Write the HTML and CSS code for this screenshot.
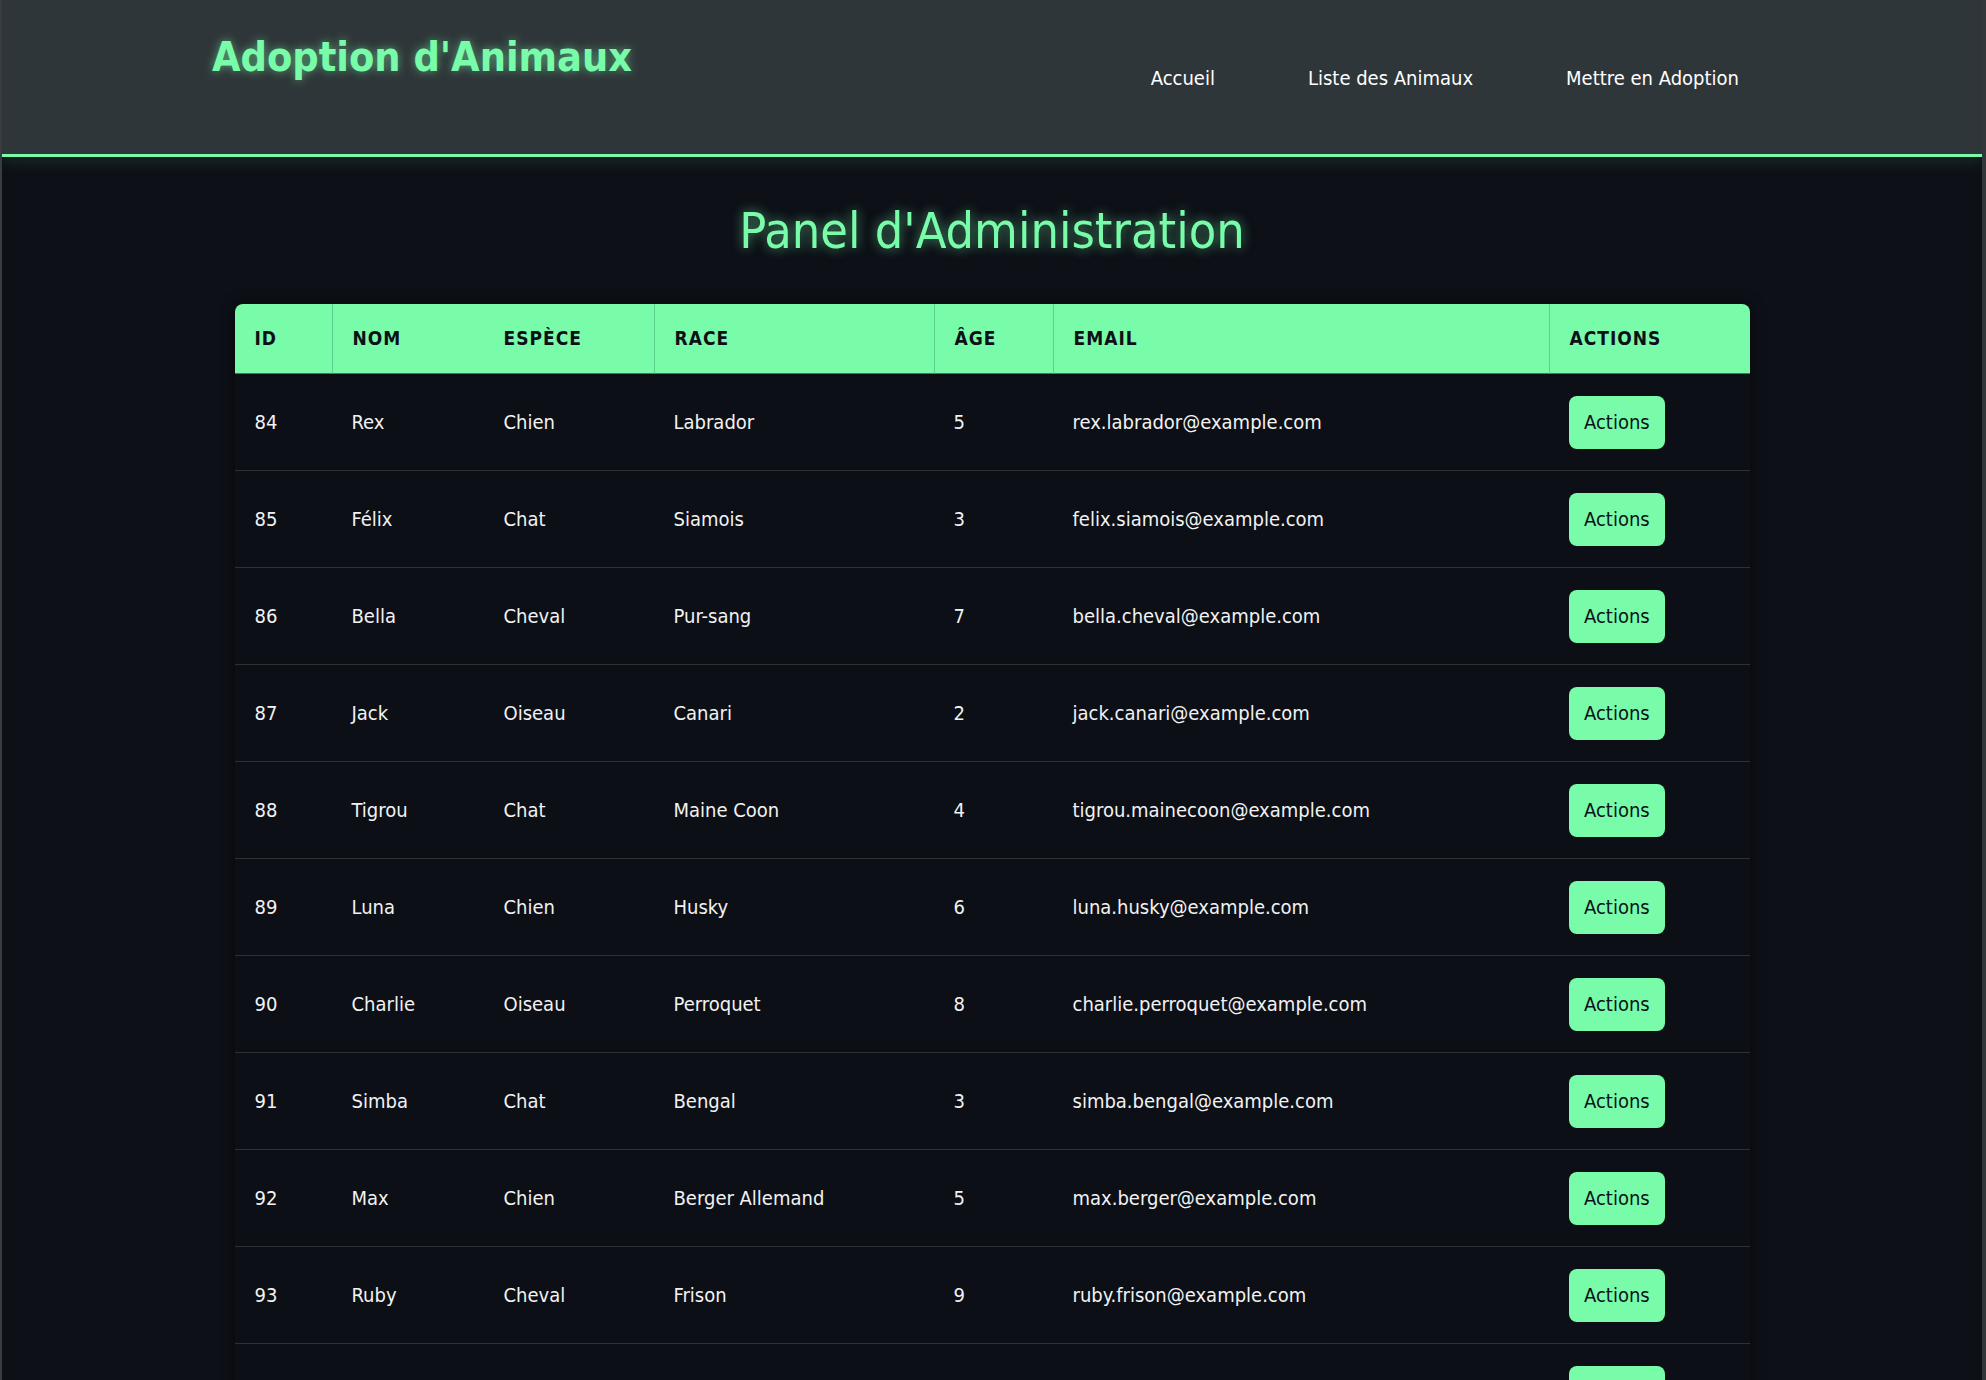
FILE: index.html
```html
<!DOCTYPE html>
<html lang="fr">
<head>
<meta charset="utf-8">
<title>Panel d'Administration</title>
<link rel="stylesheet" href="styles.css">
</head>
<body>
<header class="site-header">
  <div class="header-inner">
    <h1 class="brand">Adoption d'Animaux</h1>
    <nav class="main-nav">
      <a href="#" class="nav-link">Accueil</a>
      <a href="#" class="nav-link">Liste des Animaux</a>
      <a href="#" class="nav-link">Mettre en Adoption</a>
    </nav>
  </div>
</header>
<main class="admin">
  <h2 class="admin-title">Panel d'Administration</h2>
  <table class="admin-table">
    <thead>
      <tr>
        <th class="col-id">ID</th>
        <th class="col-nom sep">Nom</th>
        <th class="col-espece">Espèce</th>
        <th class="col-race sep">Race</th>
        <th class="col-age sep">Âge</th>
        <th class="col-email sep">Email</th>
        <th class="col-actions sep">Actions</th>
      </tr>
    </thead>
    <tbody>
      <tr><td>84</td><td>Rex</td><td>Chien</td><td>Labrador</td><td>5</td><td>rex.labrador@example.com</td><td><button class="btn-actions">Actions</button></td></tr>
      <tr><td>85</td><td>Félix</td><td>Chat</td><td>Siamois</td><td>3</td><td>felix.siamois@example.com</td><td><button class="btn-actions">Actions</button></td></tr>
      <tr><td>86</td><td>Bella</td><td>Cheval</td><td>Pur-sang</td><td>7</td><td>bella.cheval@example.com</td><td><button class="btn-actions">Actions</button></td></tr>
      <tr><td>87</td><td>Jack</td><td>Oiseau</td><td>Canari</td><td>2</td><td>jack.canari@example.com</td><td><button class="btn-actions">Actions</button></td></tr>
      <tr><td>88</td><td>Tigrou</td><td>Chat</td><td>Maine Coon</td><td>4</td><td>tigrou.mainecoon@example.com</td><td><button class="btn-actions">Actions</button></td></tr>
      <tr><td>89</td><td>Luna</td><td>Chien</td><td>Husky</td><td>6</td><td>luna.husky@example.com</td><td><button class="btn-actions">Actions</button></td></tr>
      <tr><td>90</td><td>Charlie</td><td>Oiseau</td><td>Perroquet</td><td>8</td><td>charlie.perroquet@example.com</td><td><button class="btn-actions">Actions</button></td></tr>
      <tr><td>91</td><td>Simba</td><td>Chat</td><td>Bengal</td><td>3</td><td>simba.bengal@example.com</td><td><button class="btn-actions">Actions</button></td></tr>
      <tr><td>92</td><td>Max</td><td>Chien</td><td>Berger Allemand</td><td>5</td><td>max.berger@example.com</td><td><button class="btn-actions">Actions</button></td></tr>
      <tr><td>93</td><td>Ruby</td><td>Cheval</td><td>Frison</td><td>9</td><td>ruby.frison@example.com</td><td><button class="btn-actions">Actions</button></td></tr>
      <tr><td>94</td><td>Milo</td><td>Chien</td><td>Beagle</td><td>2</td><td>milo.beagle@example.com</td><td><button class="btn-actions">Actions</button></td></tr>
    </tbody>
  </table>
</main>
</body>
</html>
```
FILE: styles.css
```css
* { box-sizing: border-box; }

html { background: #0d1017; }

body {
  margin: 0;
  min-height: 100vh;
  background: #0d1017;
  color: #f2f2f2;
  font-family: "DejaVu Sans Condensed", "DejaVu Sans", sans-serif;
  font-stretch: condensed;
  font-size: 20px;
  border-left: 2px solid #3a3d40;
  border-right: 4px solid #34373a;
}

.site-header {
  background: #2f3639;
  border-bottom: 3px solid #78fcaa;
  box-shadow: 0 4px 16px rgba(120, 252, 170, 0.12);
  height: 157px;
}

.header-inner {
  width: 1560px;
  margin: 0 auto;
  display: flex;
  justify-content: space-between;
  align-items: flex-start;
}

.brand {
  margin: 33px 0 0;
  font-size: 41px;
  font-weight: bold;
  color: #78fcaa;
  text-shadow: 0 0 10px rgba(120, 252, 170, 0.55);
  line-height: normal;
}

.main-nav {
  display: flex;
  gap: 93px;
  margin: 66px 33px 0 0;
}

.nav-link {
  color: #ffffff;
  text-decoration: none;
  font-size: 20px;
}

.admin {
  padding: 0 0 40px;
}

.admin-title {
  margin: 45px 0 44px;
  text-align: center;
  font-size: 50px;
  font-weight: normal;
  color: #78fcaa;
  text-shadow: 0 0 12px rgba(120, 252, 170, 0.6);
  line-height: normal;
}

.admin-table {
  width: 1515px;
  margin: 0 auto;
  border-collapse: separate;
  border-spacing: 0;
  background: #0c0f16;
  box-shadow: 0 0 14px rgba(0, 0, 0, 0.55);
  border-radius: 8px 8px 0 0;
}

.admin-table th {
  background: #78fcaa;
  color: #0d1117;
  font-size: 19px;
  font-weight: bold;
  text-transform: uppercase;
  letter-spacing: 1px;
  text-align: left;
  padding: 24px 20px;
  border-bottom: 1px solid #3a7d57;
  line-height: 21px;
}

.admin-table th.sep { border-left: 1px solid #5fcf8c; }
.admin-table th:first-child { border-top-left-radius: 8px; }
.admin-table th:last-child { border-top-right-radius: 8px; }

.col-id { width: 97px; }
.col-nom { width: 152px; }
.col-espece { width: 170px; }
.col-race { width: 280px; }
.col-age { width: 119px; }
.col-email { width: 496px; }
.col-actions { width: 201px; }

.admin-table td {
  padding: 21.5px 20px;
  border-bottom: 1px solid #2c3136;
  vertical-align: middle;
  line-height: 23px;
  color: #f2f2f2;
}

.btn-actions {
  font-family: inherit;
  font-stretch: condensed;
  font-size: 20px;
  line-height: 23px;
  padding: 15px 15.5px;
  background: #78fcaa;
  color: #0d1117;
  border: none;
  border-radius: 8px;
  cursor: pointer;
}
```
